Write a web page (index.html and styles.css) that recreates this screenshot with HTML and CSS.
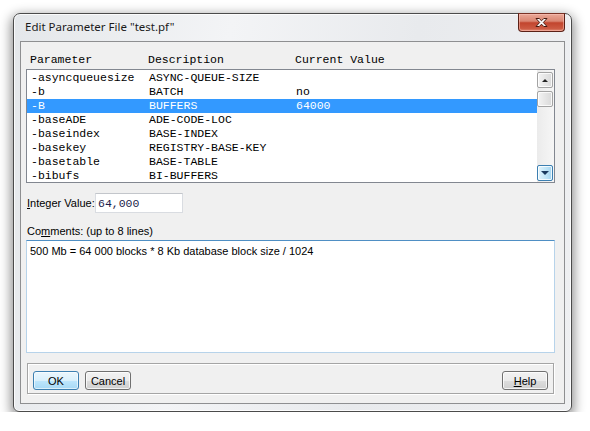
FILE: index.html
```html
<!DOCTYPE html>
<html lang="en">
<head>
    <meta charset="UTF-8">
    <title>Edit Parameter File</title>
    <link rel="stylesheet" href="styles.css">
</head>
<body>
    <div class="window">
        <div class="titlebar">
            <span class="title">Edit Parameter File "test.pf"</span>
            <button class="close" type="button">
                <svg width="13" height="11" viewBox="0 0 13 11">
                    <path d="M1 1.5h3.2l2.3 2.3 2.3-2.3H12L8.3 5.5 12 9.5H8.8L6.5 7.2 4.2 9.5H1l3.7-4z" fill="#fff" stroke="#47190f" stroke-width="1" stroke-linejoin="round"/>
                </svg>
            </button>
        </div>

        <div class="client">
            <div class="cols head">
                <span>Parameter</span><span>Description</span><span>Current Value</span>
            </div>

            <div class="listbox">
                <div class="rows">
                    <div class="cols row"><span>-asyncqueuesize</span><span>ASYNC-QUEUE-SIZE</span><span></span></div>
                    <div class="cols row"><span>-b</span><span>BATCH</span><span>no</span></div>
                    <div class="cols row selected"><span>-B</span><span>BUFFERS</span><span>64000</span></div>
                    <div class="cols row"><span>-baseADE</span><span>ADE-CODE-LOC</span><span></span></div>
                    <div class="cols row"><span>-baseindex</span><span>BASE-INDEX</span><span></span></div>
                    <div class="cols row"><span>-basekey</span><span>REGISTRY-BASE-KEY</span><span></span></div>
                    <div class="cols row"><span>-basetable</span><span>BASE-TABLE</span><span></span></div>
                    <div class="cols row"><span>-bibufs</span><span>BI-BUFFERS</span><span></span></div>
                </div>
                <div class="vscroll">
                    <div class="sbtn"><span class="arrow-up"></span></div>
                    <div class="thumb"></div>
                    <div class="track"></div>
                    <div class="sbtn hot"><span class="arrow-down"></span></div>
                </div>
            </div>

            <div class="field">
                <label for="int_value"><u>I</u>nteger Value:</label>
                <input id="int_value" class="intval" type="text" value="64,000">
            </div>

            <label class="comments-label" for="comments">Co<u>m</u>ments: (up to 8 lines)</label>
            <textarea id="comments" class="comments">500 Mb = 64 000 blocks * 8 Kb database block size / 1024</textarea>

            <div class="buttons">
                <button class="btn default" type="button">OK</button>
                <button class="btn" type="button">Cancel</button>
                <button class="btn help" type="button"><u>H</u>elp</button>
            </div>
        </div>
    </div>
</body>
</html>
```

FILE: styles.css
```css
body {
    margin: 0;
    background: #fff;
    font-family: "Liberation Sans", Arial, sans-serif;
    font-size: 11px;
    color: #000;
}

.window {
    margin: 13px 0 0 13px;
    width: 559px;
    height: 399px;
    box-sizing: border-box;
    border: 1px solid #4b4b4b;
    border-radius: 7px 7px 6px 6px;
    background: linear-gradient(100deg, #e4e7ea 0%, #f3f4f6 35%, #e8eaed 65%, #eff0f2 100%);
    box-shadow: 0 4px 12px 2px rgba(0, 0, 0, 0.45), inset 0 0 0 1px rgba(255, 255, 255, 0.8);
    display: flex;
    flex-direction: column;
}

.titlebar {
    height: 27px;
    display: flex;
    align-items: flex-start;
    padding-left: 11px;
}
.title {
    font-family: "Noto Sans", "Open Sans", sans-serif;
    font-size: 11.5px;
    line-height: 25px;
    color: #1a1a1a;
    flex: 1;
}
.close {
    margin: -1px 6px 0 0;
    width: 47px;
    height: 19px;
    padding: 0;
    border: 1px solid #5b2016;
    border-top-color: #7a3326;
    border-radius: 0 0 4px 4px;
    background: linear-gradient(#eaa898 0%, #da8672 42%, #c2452e 52%, #cc5a42 85%, #e08a74 100%);
    box-shadow: inset 0 0 0 1px rgba(255, 200, 190, 0.5);
    display: flex;
    align-items: center;
    justify-content: center;
}
.close svg {
    display: block;
}

.client {
    margin: 0 6px 7px 6px;
    height: 363px;
    box-sizing: border-box;
    border: 1px solid #8e8f91;
    background: #f0f0f0;
    padding: 0 9px 0 5px;
}

.cols {
    display: grid;
    grid-template-columns: 118px 147px 1fr;
    padding-left: 4px;
    font-family: "Liberation Mono", "Courier New", monospace;
    font-size: 11.5px;
    white-space: pre;
}
.head {
    margin-top: 11px;
    height: 14px;
    line-height: 14px;
}

.listbox {
    margin-top: 2px;
    height: 114px;
    box-sizing: border-box;
    border: 1px solid #828790;
    background: #fff;
    display: flex;
}
.rows {
    flex: 1;
    overflow: hidden;
    padding-top: 1px;
}
.row {
    height: 14px;
    line-height: 14px;
}
.row.selected {
    background: #3399ff;
    color: #fff;
}

.vscroll {
    width: 17px;
    box-sizing: border-box;
    padding: 2px 1px 1px 0;
    background: linear-gradient(to right, #ebebeb, #f6f6f6);
    display: flex;
    flex-direction: column;
}
.sbtn,
.thumb {
    height: 16px;
    box-sizing: border-box;
    border: 1px solid #a3a3a3;
    border-radius: 2px;
    background: linear-gradient(to right, #f4f4f4, #e6e6e6 50%, #d9d9d9);
    box-shadow: inset 0 0 0 1px rgba(255, 255, 255, 0.8);
    display: flex;
    align-items: center;
    justify-content: center;
}
.thumb {
    margin-top: 3px;
    height: 16px;
}
.track {
    flex: 1;
}
.sbtn.hot {
    border-color: #3c7fb1;
    background: linear-gradient(to right, #e3f4fc, #c4e7f8 50%, #a4d5f0);
}
.arrow-up {
    width: 0;
    height: 0;
    border-left: 3px solid transparent;
    border-right: 3px solid transparent;
    border-bottom: 3px solid #222;
}
.arrow-down {
    width: 0;
    height: 0;
    border-left: 4px solid transparent;
    border-right: 4px solid transparent;
    border-top: 4px solid #1b3a5e;
}

.field {
    margin-top: 10px;
    height: 20px;
    display: flex;
    align-items: center;
}
.field label {
    width: 68px;
    margin-left: 1px;
}
.intval {
    width: 88px;
    height: 20px;
    box-sizing: border-box;
    margin: 0;
    padding: 0 2px;
    border: 1px solid #d9dce1;
    border-top-color: #c3c6cb;
    background: #fff;
    font-family: "Liberation Mono", "Courier New", monospace;
    font-size: 11.5px;
    color: #1c1c4a;
    outline: none;
}

.comments-label {
    display: block;
    margin: 11px 0 0 1px;
    height: 14px;
    line-height: 14px;
}
.comments {
    display: block;
    margin: 2px 0 0 0;
    width: 529px;
    height: 113px;
    box-sizing: border-box;
    padding: 3px 3px;
    border: 1px solid #b7d3ea;
    border-top-color: #4f8fc4;
    background: #fff;
    font-family: "Liberation Sans", Arial, sans-serif;
    font-size: 11px;
    line-height: 14px;
    color: #000;
    resize: none;
    outline: none;
}

.buttons {
    margin: 10px 1px 0 1px;
    height: 31px;
    box-sizing: border-box;
    border: 1px solid #a5a5a5;
    box-shadow: inset 1px 1px 0 #fff, 1px 1px 0 #fff;
    padding: 7px 5px 0 5px;
    display: flex;
    align-items: flex-start;
    gap: 6px;
}
.btn {
    width: 46px;
    height: 19px;
    padding: 0;
    border: 1px solid #707070;
    border-radius: 3px;
    background: linear-gradient(#f2f2f2 0%, #ebebeb 50%, #dddddd 51%, #cfcfcf 100%);
    box-shadow: inset 0 0 0 1px rgba(255, 255, 255, 0.75);
    font-family: "Liberation Sans", Arial, sans-serif;
    font-size: 11px;
    color: #000;
}
.btn.default {
    border-color: #3c7fb1;
    background: linear-gradient(#eaf6fd 0%, #d9f0fc 50%, #bee6fd 51%, #a7d9f5 100%);
    box-shadow: inset 0 0 0 1px rgba(255, 255, 255, 0.6), 0 0 0 0 transparent;
}
.btn.help {
    margin-left: auto;
}
```
